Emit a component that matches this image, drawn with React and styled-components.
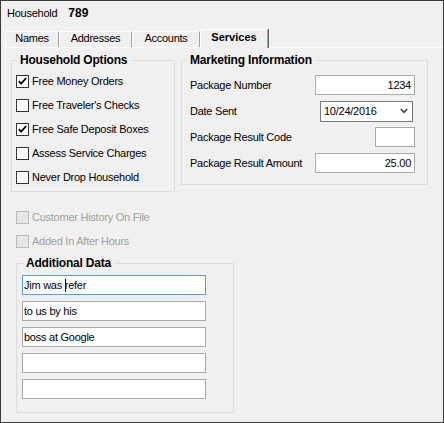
import React from "react";
import styled, { createGlobalStyle } from "styled-components";

const Global = createGlobalStyle`
  html, body { margin: 0; padding: 0; background: #f0f0f0; }
  * { box-sizing: border-box; }
`;

const FONT = `"Liberation Sans", Arial, sans-serif`;

const Window = styled.div`
  width: 444px;
  height: 423px;
  border: 1px solid #3a3a3a;
  background: #f0f0f0;
  overflow: hidden;
  font-family: ${FONT};
  font-size: 11px;
  line-height: 13px;
  letter-spacing: -0.25px;
  color: #000;
  display: flex;
  flex-direction: column;
`;

const Header = styled.div`
  display: flex;
  align-items: baseline;
  gap: 11px;
  padding: 5px 0 0 6px;
  height: 19px;
  line-height: 14px;
`;

const HeaderValue = styled.span`
  font-weight: bold;
  font-size: 12px;
  letter-spacing: 0;
`;

const TabStrip = styled.div`
  display: flex;
  align-items: flex-end;
  height: 18px;
  margin-top: 9px;
  padding-left: 4px;
`;

const Tab = styled.div`
  position: relative;
  width: ${(p) => p.$w}px;
  height: ${(p) => (p.$active ? 19 : 16)}px;
  margin-bottom: ${(p) => (p.$active ? -1 : 0)}px;
  z-index: ${(p) => (p.$active ? 2 : 1)};
  padding-top: ${(p) => (p.$active ? 1 : 0)}px;
  background: #f0f0f0;
  border-top: 1px solid #ffffff;
  border-left: 1px solid #ffffff;
  border-right: 1px solid #a0a0a0;
  box-shadow: 1px 0 0 #696969;
  text-align: center;
  font-weight: ${(p) => (p.$active ? "bold" : "normal")};
  letter-spacing: ${(p) => (p.$active ? "0" : "-0.25px")};
`;

const Panel = styled.div`
  flex: 1;
  margin-left: 4px;
  border-top: 1px solid #ffffff;
  border-left: 1px solid #ffffff;
  padding: 5px 0 0 5px;
`;

const TopRow = styled.div`
  display: flex;
  align-items: flex-start;
  gap: 6px;
`;

const GroupBox = styled.fieldset`
  margin: ${(p) => p.$mt || 0}px 0 0 ${(p) => p.$ml || 0}px;
  width: ${(p) => p.$w}px;
  min-width: 0;
  border: 1px solid #dcdcdc;
  padding: ${(p) => p.$pad};
`;

const Legend = styled.legend`
  margin-left: ${(p) => p.$ml}px;
  padding: 0 3px;
  font-weight: bold;
  font-size: 12px;
  line-height: 14px;
  letter-spacing: -0.2px;
`;

const CheckRow = styled.div`
  display: flex;
  align-items: flex-start;
  gap: 3px;
  height: 24px;
  padding-top: 6px;
  color: ${(p) => (p.$disabled ? "#a0a0a0" : "#000")};
`;

const Box = styled.span`
  flex: none;
  width: 13px;
  height: 13px;
  border: 1px solid ${(p) => (p.$disabled ? "#bcbcbc" : "#333333")};
  background: ${(p) => (p.$disabled ? "#e6e6e6" : "#ffffff")};
  display: flex;
`;

const DisabledList = styled.div`
  margin-top: 13px;
  padding-left: 5px;
`;

const FieldRow = styled.div`
  height: 26px;
  display: flex;
  align-items: center;
  justify-content: space-between;
`;

const TextBox = styled.div`
  width: ${(p) => p.$w}px;
  height: 20px;
  border: 1px solid ${(p) => (p.$focus ? "#569de5" : "#a9a9a9")};
  background: #ffffff;
  display: flex;
  align-items: center;
  justify-content: ${(p) => (p.$right ? "flex-end" : "flex-start")};
  padding: 0 3px 0 1px;
  white-space: pre;
`;

const DateBox = styled.div`
  width: 93px;
  height: 21px;
  margin-right: 2px;
  border: 1px solid #7a7a7a;
  background: #ffffff;
  display: flex;
  align-items: center;
  justify-content: space-between;
  padding: 0 4px 0 3px;
`;

const Caret = styled.span`
  display: inline-block;
  width: 1px;
  height: 13px;
  margin-right: -1px;
  background: #000;
`;

const DataList = styled.div`
  display: flex;
  flex-direction: column;
  gap: 6px;
`;

function Check({ checked, disabled, children }) {
  return (
    <CheckRow $disabled={disabled}>
      <Box $disabled={disabled}>
        {checked && (
          <svg width="11" height="11" viewBox="0 0 11 11">
            <path d="M1.8 5.2 L4.1 7.6 L9.2 2" fill="none" stroke="#000" strokeWidth="1.8" />
          </svg>
        )}
      </Box>
      <span>{children}</span>
    </CheckRow>
  );
}

export default function App() {
  return (
    <>
      <Global />
      <Window>
        <Header>
          <span>Household</span>
          <HeaderValue>789</HeaderValue>
        </Header>
        <TabStrip>
          <Tab $w={54}>Names</Tab>
          <Tab $w={73}>Addresses</Tab>
          <Tab $w={68}>Accounts</Tab>
          <Tab $w={68} $active>Services</Tab>
        </TabStrip>
        <Panel>
          <TopRow>
            <GroupBox $w={164} $pad="2px 0 2px 4px">
              <Legend $ml={1}>Household Options</Legend>
              <Check checked>Free Money Orders</Check>
              <Check>Free Traveler's Checks</Check>
              <Check checked>Free Safe Deposit Boxes</Check>
              <Check>Assess Service Charges</Check>
              <Check>Never Drop Household</Check>
            </GroupBox>
            <GroupBox $w={247} $pad="5px 12px 8px 8px">
              <Legend $ml={-3}>Marketing Information</Legend>
              <FieldRow>
                <span>Package Number</span>
                <TextBox $w={100} $right>1234</TextBox>
              </FieldRow>
              <FieldRow>
                <span>Date Sent</span>
                <DateBox>
                  <span>10/24/2016</span>
                  <svg width="8" height="6" viewBox="0 0 8 6">
                    <path d="M0.8 1 L4 4.4 L7.2 1" fill="none" stroke="#444" strokeWidth="1.6" />
                  </svg>
                </DateBox>
              </FieldRow>
              <FieldRow>
                <span>Package Result Code</span>
                <TextBox $w={40} $right />
              </FieldRow>
              <FieldRow>
                <span>Package Result Amount</span>
                <TextBox $w={100} $right>25.00</TextBox>
              </FieldRow>
            </GroupBox>
          </TopRow>
          <DisabledList>
            <Check disabled>Customer History On File</Check>
            <Check disabled>Added In After Hours</Check>
          </DisabledList>
          <GroupBox $w={218} $ml={5} $mt={3} $pad="5px 0 13px 5px">
            <Legend $ml={1}>Additional Data</Legend>
            <DataList>
              <TextBox $w={184} $focus>
                Jim was <Caret />refer
              </TextBox>
              <TextBox $w={184}>to us by his</TextBox>
              <TextBox $w={184}>boss at Google</TextBox>
              <TextBox $w={184} />
              <TextBox $w={184} />
            </DataList>
          </GroupBox>
        </Panel>
      </Window>
    </>
  );
}
